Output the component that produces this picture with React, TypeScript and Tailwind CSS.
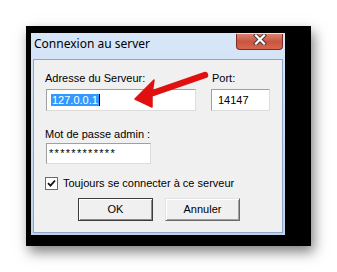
import React from "react";

const uiFont = { fontFamily: '"Liberation Sans", Arial, sans-serif' };

export default function App() {
  return (
    <div className="relative w-[337px] h-[272px] bg-white overflow-hidden" style={uiFont}>
      <div className="pt-[26px] pl-[26px]">
        <div className="w-[285px] h-[220px] bg-black shadow-[3px_6px_12px_rgba(0,0,0,0.5)] pt-[7px] pl-[5px]">
          <div className="w-[254px] h-[202px] flex flex-col bg-gradient-to-b from-[#d8e7f8] via-[#c9dcf2] to-[#bcd3ee]">
            {/* Title bar */}
            <div className="h-[26px] flex items-start justify-between">
              <span
                className="mt-[3px] ml-[3px] text-[12px] leading-[16px] text-black"
                style={{ fontFamily: '"Noto Sans", "Open Sans", sans-serif' }}
              >
                Connexion au server
              </span>
              <div className="mt-[1px] mr-[2px] w-[47px] h-[16px] rounded-b-[4px] border border-t-0 border-[#7a2b22] bg-gradient-to-b from-[#d9826f] via-[#c9553f] to-[#d8654c] flex items-start justify-center">
                <svg width="14" height="11" viewBox="0 0 14 11">
                  <path d="M3 1.5 L11 9.5 M11 1.5 L3 9.5" stroke="#4a3a3a" strokeWidth="4.2" strokeLinecap="square" />
                  <path d="M3 1.5 L11 9.5 M11 1.5 L3 9.5" stroke="#ffffff" strokeWidth="2.2" strokeLinecap="square" />
                </svg>
              </div>
            </div>
            {/* Panel */}
            <div className="mx-[2px] h-[174px] border border-[#8ea7c6] bg-[#f0f0f0] pt-[12px] pl-[11px] text-[11px] leading-[13px] text-black">
              <div className="flex">
                <div className="flex flex-col">
                  <span>Adresse du Serveur:</span>
                  <div className="mt-[4px] ml-[1px] w-[150px] h-[22px] bg-white border border-[#a0a0a0] border-r-[#dcdcdc] border-b-[#dcdcdc] flex items-center pl-[4px]">
                    <span className="bg-[#3399ff] text-white px-[1px] h-[12px] leading-[12px]">127.0.0.1</span>
                    <span className="w-px h-[12px] bg-black" />
                  </div>
                </div>
                <div className="flex flex-col ml-[15px]">
                  <span className="pl-[1px]">Port:</span>
                  <div className="mt-[4px] w-[59px] h-[22px] bg-white border border-[#a0a0a0] border-r-[#dcdcdc] border-b-[#dcdcdc] flex items-center pl-[6px]">
                    <span>14147</span>
                  </div>
                </div>
              </div>
              <div className="mt-[17px]">Mot de passe admin :</div>
              <div className="mt-[2px] ml-[1px] w-[105px] h-[21px] bg-white border border-[#a0a0a0] border-r-[#dcdcdc] border-b-[#dcdcdc] flex items-center pl-[2px]">
                <span className="tracking-[1.3px]">************</span>
              </div>
              <div className="mt-[13px] flex items-start">
                <div className="w-[13px] h-[13px] border border-[#6b6b6b] bg-white flex items-center justify-center">
                  <svg width="9" height="9" viewBox="0 0 9 9">
                    <path d="M1 4.2 L3.5 6.7 L8 1.5" stroke="#111" strokeWidth="1.8" fill="none" />
                  </svg>
                </div>
                <span className="ml-[5px]">Toujours se connecter à ce serveur</span>
              </div>
              <div className="mt-[8px] ml-[33px] flex gap-[12px]">
                <button className="w-[75px] h-[23px] bg-[#f0f0f0] border border-[#3c3c3c] shadow-[inset_1px_1px_0_#ffffff,inset_-1px_-1px_0_#8a8a8a] text-[11px] leading-[13px] text-black flex items-center justify-center">
                  OK
                </button>
                <button className="w-[75px] h-[23px] bg-[#f0f0f0] border border-[#e3e3e3] border-r-[#696969] border-b-[#696969] shadow-[inset_1px_1px_0_#ffffff,inset_-1px_-1px_0_#a0a0a0] text-[11px] leading-[13px] text-black flex items-center justify-center">
                  Annuler
                </button>
              </div>
            </div>
          </div>
        </div>
      </div>
      {/* Red arrow annotation */}
      <svg className="absolute left-0 top-0 pointer-events-none" width="337" height="272" viewBox="0 0 337 272">
        <path d="M205 75 L153 93" stroke="#e01010" strokeWidth="6.5" strokeLinecap="round" />
        <path d="M135 99 L154 80 L152 94 L152 107 Z" fill="#e01010" stroke="#e01010" strokeWidth="1.5" strokeLinejoin="round" />
      </svg>
    </div>
  );
}
